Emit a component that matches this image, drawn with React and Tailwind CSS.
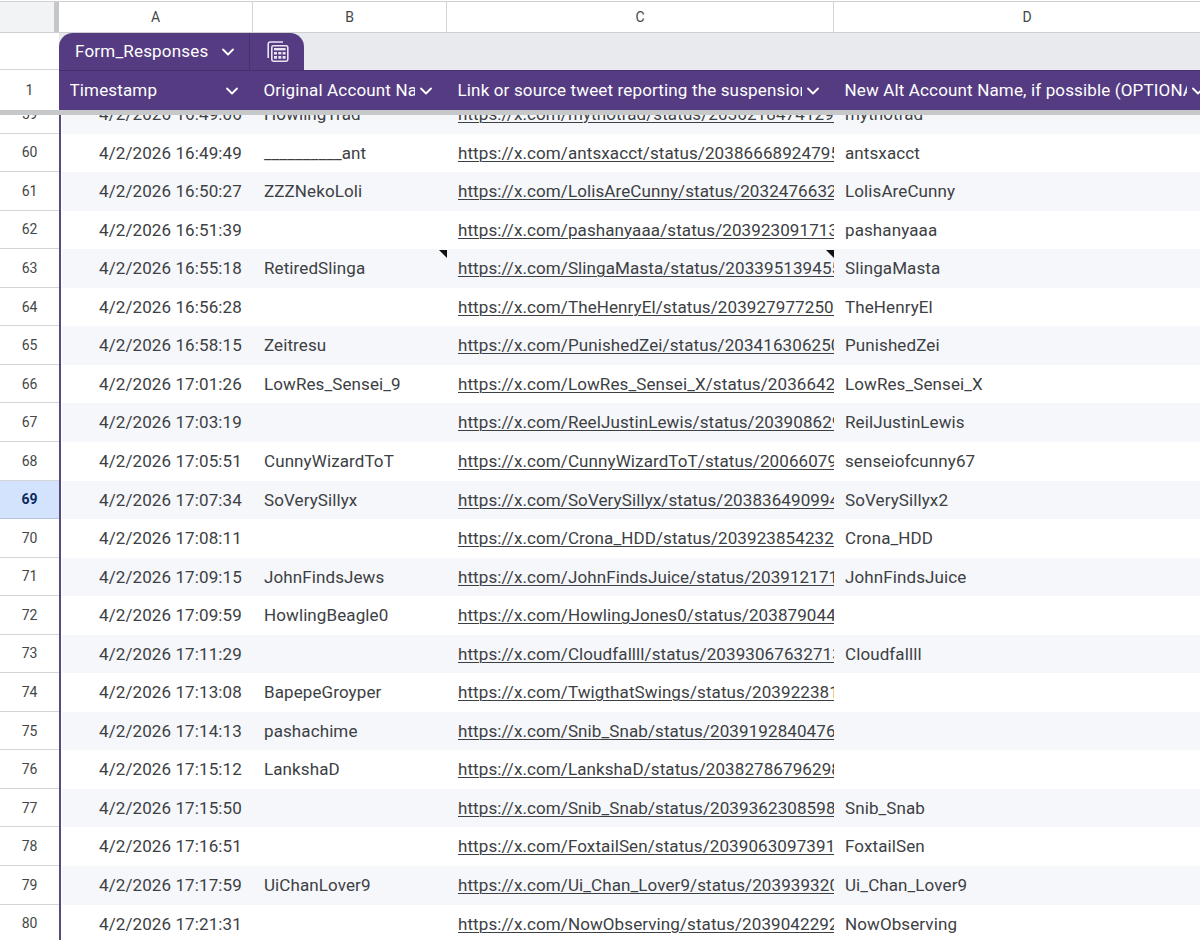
import React from "react";
import { ChevronDown } from "lucide-react";

const rows = [
  { n: 60, a: "4/2/2026 16:49:49", b: "__________ant", c: "https://x.com/antsxacct/status/20386668924795", d: "antsxacct" },
  { n: 61, a: "4/2/2026 16:50:27", b: "ZZZNekoLoli", c: "https://x.com/LolisAreCunny/status/20324766321", d: "LolisAreCunny" },
  { n: 62, a: "4/2/2026 16:51:39", b: "", c: "https://x.com/pashanyaaa/status/2039230917131", d: "pashanyaaa" },
  { n: 63, a: "4/2/2026 16:55:18", b: "RetiredSlinga", c: "https://x.com/SlingaMasta/status/2033951394551", d: "SlingaMasta", note: true },
  { n: 64, a: "4/2/2026 16:56:28", b: "", c: "https://x.com/TheHenryEl/status/2039279772501", d: "TheHenryEl" },
  { n: 65, a: "4/2/2026 16:58:15", b: "Zeitresu", c: "https://x.com/PunishedZei/status/203416306250", d: "PunishedZei" },
  { n: 66, a: "4/2/2026 17:01:26", b: "LowRes_Sensei_9", c: "https://x.com/LowRes_Sensei_X/status/20366421", d: "LowRes_Sensei_X" },
  { n: 67, a: "4/2/2026 17:03:19", b: "", c: "https://x.com/ReelJustinLewis/status/203908629", d: "ReilJustinLewis" },
  { n: 68, a: "4/2/2026 17:05:51", b: "CunnyWizardToT", c: "https://x.com/CunnyWizardToT/status/200660791", d: "senseiofcunny67" },
  { n: 69, a: "4/2/2026 17:07:34", b: "SoVerySillyx", c: "https://x.com/SoVerySillyx/status/2038364909941", d: "SoVerySillyx2", active: true },
  { n: 70, a: "4/2/2026 17:08:11", b: "", c: "https://x.com/Crona_HDD/status/2039238542321", d: "Crona_HDD" },
  { n: 71, a: "4/2/2026 17:09:15", b: "JohnFindsJews", c: "https://x.com/JohnFindsJuice/status/2039121711", d: "JohnFindsJuice" },
  { n: 72, a: "4/2/2026 17:09:59", b: "HowlingBeagle0", c: "https://x.com/HowlingJones0/status/2038790441", d: "" },
  { n: 73, a: "4/2/2026 17:11:29", b: "", c: "https://x.com/Cloudfallll/status/20393067632713", d: "Cloudfallll" },
  { n: 74, a: "4/2/2026 17:13:08", b: "BapepeGroyper", c: "https://x.com/TwigthatSwings/status/2039223811", d: "" },
  { n: 75, a: "4/2/2026 17:14:13", b: "pashachime", c: "https://x.com/Snib_Snab/status/20391928404761", d: "" },
  { n: 76, a: "4/2/2026 17:15:12", b: "LankshaD", c: "https://x.com/LankshaD/status/20382786796298", d: "" },
  { n: 77, a: "4/2/2026 17:15:50", b: "", c: "https://x.com/Snib_Snab/status/20393623085981", d: "Snib_Snab" },
  { n: 78, a: "4/2/2026 17:16:51", b: "", c: "https://x.com/FoxtailSen/status/20390630973911", d: "FoxtailSen" },
  { n: 79, a: "4/2/2026 17:17:59", b: "UiChanLover9", c: "https://x.com/Ui_Chan_Lover9/status/2039393201", d: "Ui_Chan_Lover9" },
  { n: 80, a: "4/2/2026 17:21:31", b: "", c: "https://x.com/NowObserving/status/20390422921", d: "NowObserving" },
];

const NoteMark = () => (
  <span className="absolute right-0 top-0 h-0 w-0 border-b-[8px] border-l-[8px] border-r-[8px] border-b-transparent border-l-transparent border-r-[#111]" />
);

const Row = ({ row, striped }) => (
  <div className="flex h-[38.55px] shrink-0">
    <div
      className={`flex w-[59px] shrink-0 items-center justify-center border-b-[1.5px] pt-[1px] text-[14px] ${
        row.active
          ? "border-[#b5c4de] bg-[#d3e3fd] font-bold text-[#0b2a5c]"
          : "border-[#d5d5d8] bg-white text-[#444746]"
      }`}
    >
      {row.n}
    </div>
    <div className="w-[1.5px] shrink-0 bg-[#544c7e]" />
    <div className="w-[1.5px] shrink-0 bg-white" />
    <div className={`flex min-w-0 flex-1 items-center pt-[1px] text-[17px] tracking-[0.1px] text-[#3c4043] ${striped ? "bg-[#f6f7fa]" : "bg-white"}`}>
      <div className="w-[191px] shrink-0 whitespace-nowrap pl-[37px]">{row.a}</div>
      <div className="relative flex h-full w-[194px] shrink-0 items-center whitespace-nowrap pl-[11px]">
        {row.b}
        {row.note && <NoteMark />}
      </div>
      <div className="relative flex h-full w-[387px] shrink-0 items-center overflow-hidden whitespace-nowrap pl-[11px]">
        <span className="underline decoration-1 underline-offset-2">{row.c}</span>
        {row.note && <NoteMark />}
      </div>
      <div className="flex-1 whitespace-nowrap pl-[11px]">{row.d}</div>
    </div>
  </div>
);

const HeaderCell = ({ width, label, last }) => (
  <div className={`flex h-full ${width} shrink-0 items-center pl-[10.5px] pt-[1px] text-[17px] tracking-[0.15px] text-white`}>
    <span className="min-w-0 flex-1 overflow-hidden whitespace-nowrap">{label}</span>
    <ChevronDown className={`h-[20px] w-[20px] shrink-0 ${last ? "mr-[-8px]" : "mr-[11px]"} ml-[1px]`} strokeWidth={2.2} />
  </div>
);

// stacked calculator glyph used by converted tables
const TableCalcIcon = () => (
  <svg width="22" height="21" viewBox="0 0 22 21" fill="none">
    <path d="M1.2 17V3a2 2 0 0 1 2-2H16" stroke="#e9e4f2" strokeWidth="1.6" />
    <rect x="4.8" y="4.8" width="16" height="15.4" rx="1.6" stroke="#e9e4f2" strokeWidth="1.6" />
    <rect x="7" y="7" width="11.6" height="2.4" fill="#e9e4f2" />
    <path d="M7 11h3v2.6H7zM11.3 11h3v2.6h-3zM15.6 11h3v2.6h-3zM7 15h3v2.8H7zM11.3 15h3v2.8h-3zM15.6 15h3v2.8h-3z" fill="#e9e4f2" />
  </svg>
);

export default function App() {
  return (
    <div className="relative flex h-[940px] w-[1200px] flex-col overflow-hidden bg-white font-['Roboto',sans-serif]">
      {/* column letters */}
      <div className="mt-[1px] flex h-[32px] shrink-0 border-y border-[#cfcfd2] text-[14px] text-[#444746]">
        <div className="w-[54px] shrink-0 bg-[#f1f3f4]" />
        <div className="w-[5px] shrink-0 bg-[#c4c6c8]" />
        <div className="flex w-[194px] shrink-0 items-center justify-center border-r border-[#d5d5d8]">A</div>
        <div className="flex w-[194px] shrink-0 items-center justify-center border-r border-[#d5d5d8]">B</div>
        <div className="flex w-[387px] shrink-0 items-center justify-center border-r border-[#d5d5d8]">C</div>
        <div className="flex flex-1 items-center justify-center pl-[20px]">D</div>
      </div>

      {/* table tab */}
      <div className="flex h-[37px] shrink-0">
        <div className="w-[59px] shrink-0 border-b border-[#d5d5d8] bg-white" />
        <div className="flex flex-1 bg-[#e8eaed]">
          <div className="flex w-[245px] rounded-t-[14px] bg-[#553c82] text-white">
            <div className="flex w-[191px] items-center border-r border-[#47306f] pl-[16px] pt-[1px] text-[17px]">
              <span className="flex-1 tracking-[0.2px]">Form_Responses</span>
              <ChevronDown className="mr-[11px] h-[20px] w-[20px]" strokeWidth={2.2} />
            </div>
            <div className="flex flex-1 items-center pl-[17px]">
              <TableCalcIcon />
            </div>
          </div>
        </div>
      </div>

      {/* header row */}
      <div className="flex h-[40px] shrink-0">
        <div className="flex w-[59px] shrink-0 items-center justify-center bg-white text-[14px] text-[#444746]">1</div>
        <div className="flex min-w-0 flex-1 border-t border-[#47306f] bg-[#553c82]">
          <HeaderCell width="w-[194px]" label="Timestamp" />
          <HeaderCell width="w-[194px]" label="Original Account Name" />
          <HeaderCell width="w-[387px]" label="Link or source tweet reporting the suspension" />
          <HeaderCell width="flex-1 min-w-0" label="New Alt Account Name, if possible (OPTIONAL)" last />
        </div>
      </div>

      {/* frozen-rows bar */}
      <div className="z-10 h-[5px] shrink-0 bg-[#c6c8ca]" />

      {/* row 59 is scrolled partly under the bar */}
      <div className="flex h-[18.6px] shrink-0 flex-col justify-end overflow-hidden">
        <Row row={{ n: 59, a: "4/2/2026 16:49:06", b: "HowlingTrad", c: "https://x.com/mythotrad/status/20362184741291", d: "mythotrad" }} striped />
      </div>
      {rows.map((row, i) => (
        <Row key={row.n} row={row} striped={i % 2 === 1} />
      ))}
    </div>
  );
}
